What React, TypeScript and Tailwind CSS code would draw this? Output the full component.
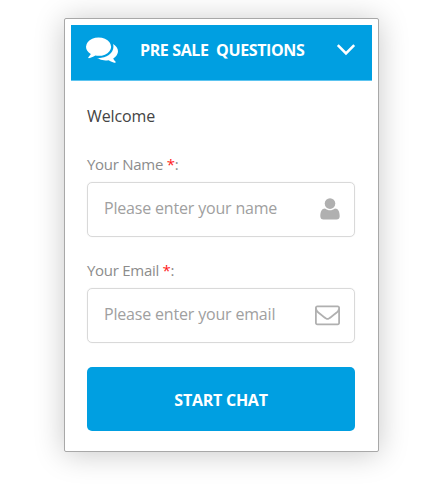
import type { ReactNode } from 'react';

const COMMENTS =
  'M1408 768q0 139-94 257t-256.5 186.5-353.5 68.5q-86 0-176-16-124 88-278 128-36 9-86 16h-3q-11 0-20.5-8t-11.5-21q-1-3-1-6.5t.5-6.5 2-6l2.5-5 3.5-5.5 4-5 4.5-5 4-4.5q5-6 23-25t26-29.5 22.5-29 25-38.5 20.5-44q-124-72-195-177t-71-224q0-139 94-257t256.5-186.5 353.5-68.5 353.5 68.5 256.5 186.5 94 257zm384 256q0 120-71 224.5t-195 176.5q10 24 20.5 44t25 38.5 22.5 29 26 29.5 23 25q1 1 4 4.5t4.5 5 4 5 3.5 5.5l2.5 5 2 6 .5 6.5-1 6.5q-3 14-13 22t-22 7q-50-7-86-16-154-40-278-128-90 16-176 16-271 0-472-132 58 4 88 4 161 0 309-45t264-129q125-92 192-212t67-254q0-77-23-152 129 71 204 178t75 230z';
const ENVELOPE =
  'M1664 1504v-768q-32 36-69 66-268 206-426 338-51 43-83 67t-86.5 48.5-102.5 24.5h-2q-48 0-102.5-24.5t-86.5-48.5-83-67q-158-132-426-338-37-30-69-66v768q0 13 9.5 22.5t22.5 9.5h1472q13 0 22.5-9.5t9.5-22.5zm0-1051v-24.5l-.5-13-3-12.5-5.5-9-9-7.5-14-2.5h-1472q-13 0-22.5 9.5t-9.5 22.5q0 168 147 284 193 152 401 317 6 5 35 29.5t46 37.5 44.5 31.5 50.5 27.5 43 9h2q20 0 43-9t50.5-27.5 44.5-31.5 46-37.5 35-29.5q208-165 401-317 54-43 100.5-115.5t46.5-131.5zm128-37v1088q0 66-47 113t-113 47h-1472q-66 0-113-47t-47-113v-1088q0-66 47-113t113-47h1472q66 0 113 47t47 113z';

function Field({ id, label, placeholder, icon }: { id: string; label: string; placeholder: string; icon: ReactNode }) {
  return (
    <div className="flex flex-col">
      <label htmlFor={id} className="-mt-px h-[28px] text-[15px] leading-5 tracking-[-0.28px] text-[#8c8c8c]">
        {label} <span className="text-[#ff1a1a]">*</span>:
      </label>
      <div className="flex h-[55px] items-center rounded-[5px] border border-[#d9d9d9] pr-[14px] pl-4 shadow-[0_0_1px_rgba(0,0,0,0.12)]">
        <input
          id={id}
          placeholder={placeholder}
          className="h-6 min-w-0 flex-1 -translate-y-[2px] bg-transparent text-base tracking-[-0.18px] outline-none placeholder:text-[#a0a0a0]"
        />
        {icon}
      </div>
    </div>
  );
}

export default function App() {
  return (
    <div className="flex h-[494px] w-[422px] bg-white pt-[18px] pl-[64px] font-['Open_Sans',sans-serif]">
      <div className="h-[434px] w-[315px] rounded-[2px] border border-[#a8a8a8] bg-white p-1.5 shadow-[0_2px_30px_rgba(0,0,0,0.22)]">
        <header className="flex h-[56px] w-[301px] items-center border-b border-[#5cc4f0] bg-[#009fe1] pr-4 pl-[15px] text-white">
          <svg className="size-8 -translate-y-[4px]" viewBox="0 0 1792 1792" fill="currentColor">
            <path d={COMMENTS} />
          </svg>
          <h1 className="ml-[22px] flex-1 -translate-y-[3px] text-base leading-6 font-bold tracking-[-0.38px] whitespace-pre">PRE SALE  QUESTIONS</h1>
          <svg className="h-3 w-5 -translate-y-[3px]" viewBox="0 0 20 12" fill="none" stroke="currentColor" strokeWidth="2.6">
            <path d="M1.8 1.2 10 9.4l8.2-8.2" />
          </svg>
        </header>
        <form className="flex flex-col pr-[17px] pl-4 pt-[23px]">
          <p className="h-[51px] text-base leading-6 tracking-[-0.12px] text-[#444]">Welcome</p>
          <div className="flex flex-col gap-6">
            <Field
              id="name"
              label="Your Name"
              placeholder="Please enter your name"
              icon={
                <svg className="h-[22px] w-5 -translate-y-px text-[#b0b0b0]" viewBox="0 0 20 22" fill="currentColor">
                  <circle cx="10" cy="5.6" r="5.3" />
                  <path d="M5 10.400C6.600 11.600 8.200 12.200 10 12.200s3.400-.6 5-1.800c3.300.1 4.700 3.200 4.700 7.800 0 2-1.200 3.300-3.200 3.300h-13c-2 0-3.200-1.300-3.200-3.300 0-4.600 1.400-7.700 4.700-7.800Z" />
                </svg>
              }
            />
            <Field
              id="email"
              label="Your Email"
              placeholder="Please enter your email"
              icon={
                <svg className="size-[25px] -translate-y-px text-[#b0b0b0]" viewBox="0 0 1792 1792" fill="currentColor">
                  <path d={ENVELOPE} />
                </svg>
              }
            />
            <button type="button" className="h-16 rounded-[5px] bg-[#009fe1] pt-[2px] text-base font-bold tracking-[-0.25px] text-white">
              START CHAT
            </button>
          </div>
        </form>
      </div>
    </div>
  );
}
